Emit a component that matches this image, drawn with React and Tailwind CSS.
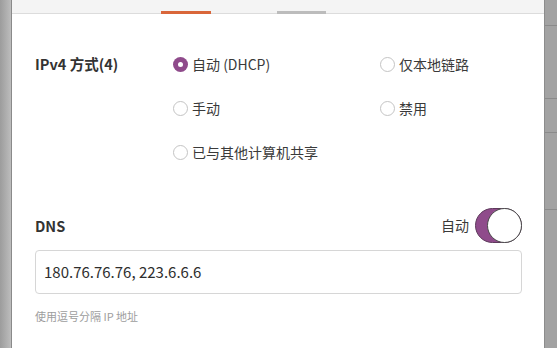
import React from "react";

const font = { fontFamily: '"Noto Sans CJK SC", "Noto Sans", sans-serif' };

const Radio = ({ checked, label }) => (
  <div className="flex items-center gap-[4px]">
    {checked ? (
      <span className="flex h-[15px] w-[15px] items-center justify-center rounded-full bg-[#8f4b8b]">
        <span className="h-[5px] w-[5px] rounded-full bg-white" />
      </span>
    ) : (
      <span className="h-[15px] w-[15px] rounded-full border border-[#c4c4c4] bg-white" />
    )}
    <span className="text-[14px] text-[#3a3a3a]">{label}</span>
  </div>
);

const Toggle = () => (
  <div className="flex h-[35px] w-[47px] items-center justify-end rounded-full border border-[#5e3a5c] bg-[#8f4b8b]">
    <span className="h-[35px] w-[35px] -mr-px rounded-full border border-[#4a4a4a] bg-white" />
  </div>
);

export default function App() {
  return (
    <div className="flex h-[348px] w-[557px] overflow-hidden bg-white" style={font}>
      {/* left edge of the window behind */}
      <div className="w-[12px] shrink-0 bg-gradient-to-r from-[#9c9c9c] to-[#bdbdbd] border-r border-[#8a8a8a]" />

      <div className="flex flex-1 flex-col">
        {/* tab strip */}
        <div className="relative h-[14px] shrink-0 border-b border-[#dcdcdc] bg-[#f4f4f4]">
          <div className="absolute bottom-[-1px] left-[149px] h-[3px] w-[50px] bg-[#d9663a]" />
          <div className="absolute bottom-[-1px] left-[265px] h-[3px] w-[49px] bg-[#bcbcbc]" />
        </div>

        <div className="flex flex-col pl-[23px] pr-[22px] pt-[28px]">
          <div className="flex">
            <div className="w-[138px] shrink-0">
              <div className="flex h-[44px] items-center text-[14.5px] font-bold text-[#333]">
                IPv4 方式(4)
              </div>
            </div>
            <div className="grid flex-1 grid-cols-[207px_1fr]">
              <div className="flex h-[44px] items-center"><Radio checked label="自动 (DHCP)" /></div>
              <div className="flex h-[44px] items-center"><Radio label="仅本地链路" /></div>
              <div className="flex h-[44px] items-center"><Radio label="手动" /></div>
              <div className="flex h-[44px] items-center"><Radio label="禁用" /></div>
              <div className="flex h-[44px] items-center"><Radio label="已与其他计算机共享" /></div>
            </div>
          </div>

          <div className="mt-[34px] flex h-[35px] items-center justify-between">
            <span className="text-[14.5px] font-bold text-[#333]">DNS</span>
            <div className="flex items-center gap-[6px]">
              <span className="text-[14px] text-[#3a3a3a]">自动</span>
              <Toggle />
            </div>
          </div>

          <div className="mt-[7px] flex h-[44px] items-center rounded-[4px] border border-[#d6d6d6] px-[8px] text-[15px] text-[#2e2e2e]">
            180.76.76.76, 223.6.6.6
          </div>

          <div className="mt-[14px] text-[11px] text-[#9d9d9d]">使用逗号分隔 IP 地址</div>
        </div>
      </div>

      {/* right edge of the window behind */}
      <div className="flex w-[13px] shrink-0 flex-col border-l border-[#8c8c8c] bg-[#a2a2a2]">
        <div className="h-[26px] border-b border-[#8a8a8a]" />
        <div className="h-[73px] border-b border-[#8a8a8a]" />
        <div className="h-[34px] border-b border-[#8a8a8a]" />
        <div className="h-[77px] border-b border-[#8a8a8a]" />
      </div>
    </div>
  );
}
